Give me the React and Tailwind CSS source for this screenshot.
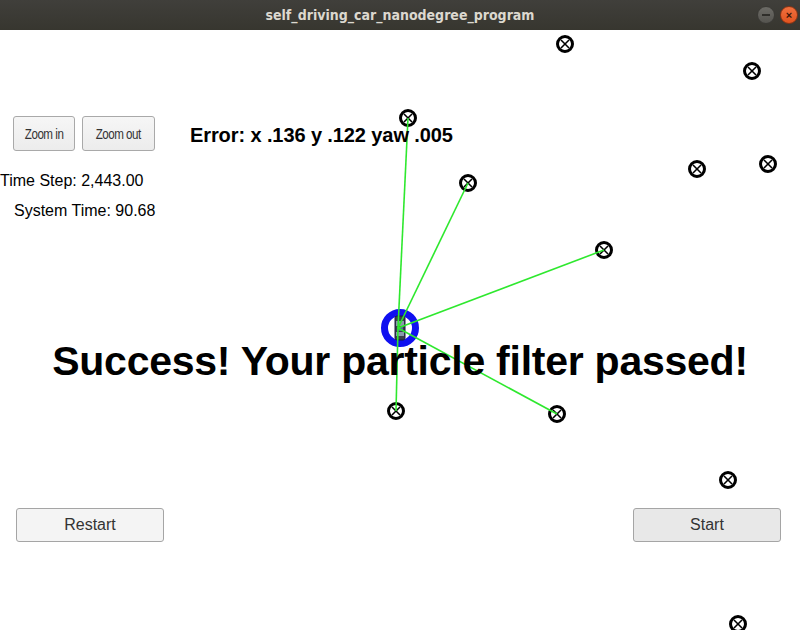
import React from 'react';

const car = { x: 400, y: 328 };

const landmarks = [
  [565, 44], [752, 71], [408, 118], [697, 169], [768, 164], [468, 183],
  [604, 250], [396, 411], [557, 414], [728, 480], [738, 624],
];

const observed = [[408, 118], [468, 183], [604, 250], [396, 411], [557, 414]];

const Landmark = ({ x, y }) => (
  <g>
    <circle cx={x} cy={y} r="7.5" fill="white" stroke="black" strokeWidth="3" />
    <line x1={x - 4} y1={y - 4} x2={x + 4} y2={y + 4} stroke="black" strokeWidth="1.6" />
    <line x1={x - 4} y1={y + 4} x2={x + 4} y2={y - 4} stroke="black" strokeWidth="1.6" />
  </g>
);

const Scene = () => (
  <svg className="absolute inset-0" width="800" height="600" viewBox="0 30 800 600">
    {landmarks.map(([x, y], i) => (
      <Landmark key={i} x={x} y={y} />
    ))}
    {/* vehicle */}
    <circle cx={car.x} cy={car.y} r="15.5" fill="none" stroke="#1010f0" strokeWidth="7" />
    <rect x={car.x - 5} y={car.y - 12} width="10" height="24" rx="2" fill="#3a3f4a" stroke="#1a1a40" strokeWidth="1" />
    <rect x={car.x - 4} y={car.y - 7} width="8" height="5" fill="#8a9aaa" />
    <rect x={car.x - 4} y={car.y + 4} width="8" height="4" fill="#8a9aaa" />
    <rect x={car.x - 3} y={car.y - 1} width="6" height="4" fill="#5560a0" />
    {observed.map(([x, y], i) => (
      <line key={i} x1={car.x - 2} y1={car.y} x2={x} y2={y} stroke="#2ee82e" strokeWidth="1.6" />
    ))}
  </svg>
);

const SmallBtn = ({ children, w }) => (
  <button className={`${w} h-[35px] rounded-[3px] border border-[#a9a9a9] bg-gradient-to-b from-[#f6f6f6] to-[#ececec] flex items-center justify-center`}>
    <span className="inline-block mt-[2px] text-[14.5px] text-[#333] tracking-[-0.6px] scale-x-[0.8] whitespace-nowrap">
      {children}
    </span>
  </button>
);

const BigBtn = ({ children, bg }) => (
  <button className={`w-[148px] h-[34px] rounded-[3px] border border-[#a5a5a5] ${bg} text-[16px] text-[#333]`}>
    {children}
  </button>
);

export default function App() {
  return (
    <div className="w-[800px] h-[630px] flex flex-col bg-white overflow-hidden font-['Liberation_Sans',Arial,sans-serif]">
      {/* title bar */}
      <div className="h-[30px] shrink-0 flex items-center bg-gradient-to-b from-[#403f3b] to-[#37362f] relative">
        <div className="flex-1 text-center text-[14px] font-bold text-[#dcd8cf] font-['DejaVu_Sans_Condensed','DejaVu_Sans',sans-serif]">
          self_driving_car_nanodegree_program
        </div>
        <div className="absolute right-[2px] top-[6px] flex gap-[5px]">
          <div className="w-[18px] h-[18px] rounded-full bg-gradient-to-b from-[#6c6b66] to-[#55544f] border border-[#3a3935] flex items-center justify-center">
            <div className="w-[8px] h-[1.5px] bg-[#2f2e2a]" />
          </div>
          <div className="w-[18px] h-[18px] rounded-full bg-gradient-to-b from-[#f0703e] to-[#e0531e] border border-[#8a3414] flex items-center justify-center text-[11px] leading-none text-[#3a1608] font-bold">
            ×
          </div>
        </div>
      </div>

      {/* canvas */}
      <div className="relative flex-1">
        <Scene />
        <div className="relative flex flex-col h-full">
          <div className="flex items-start pt-[86px] pl-[13px]">
            <div className="flex gap-[7px]">
              <SmallBtn w="w-[62px]">Zoom in</SmallBtn>
              <SmallBtn w="w-[73px]">Zoom out</SmallBtn>
            </div>
            <div className="ml-[35px] mt-[9px] text-[20px] font-bold text-black leading-none tracking-[-0.1px]">
              Error: x .136 y .122 yaw .005
            </div>
          </div>
          <div className="mt-[22px] text-[16px] text-black leading-none">Time Step: 2,443.00</div>
          <div className="mt-[14px] pl-[14px] text-[16px] text-black leading-none">System Time: 90.68</div>
          <div className="mt-[122px] text-center text-[41px] font-bold text-black leading-none tracking-[-0.25px]">
            Success! Your particle filter passed!
          </div>
          <div className="mt-[126px] flex justify-between pl-[16px] pr-[19px]">
            <BigBtn bg="bg-[#f4f4f4]">Restart</BigBtn>
            <BigBtn bg="bg-[#e8e8e8]">Start</BigBtn>
          </div>
        </div>
      </div>
    </div>
  );
}
